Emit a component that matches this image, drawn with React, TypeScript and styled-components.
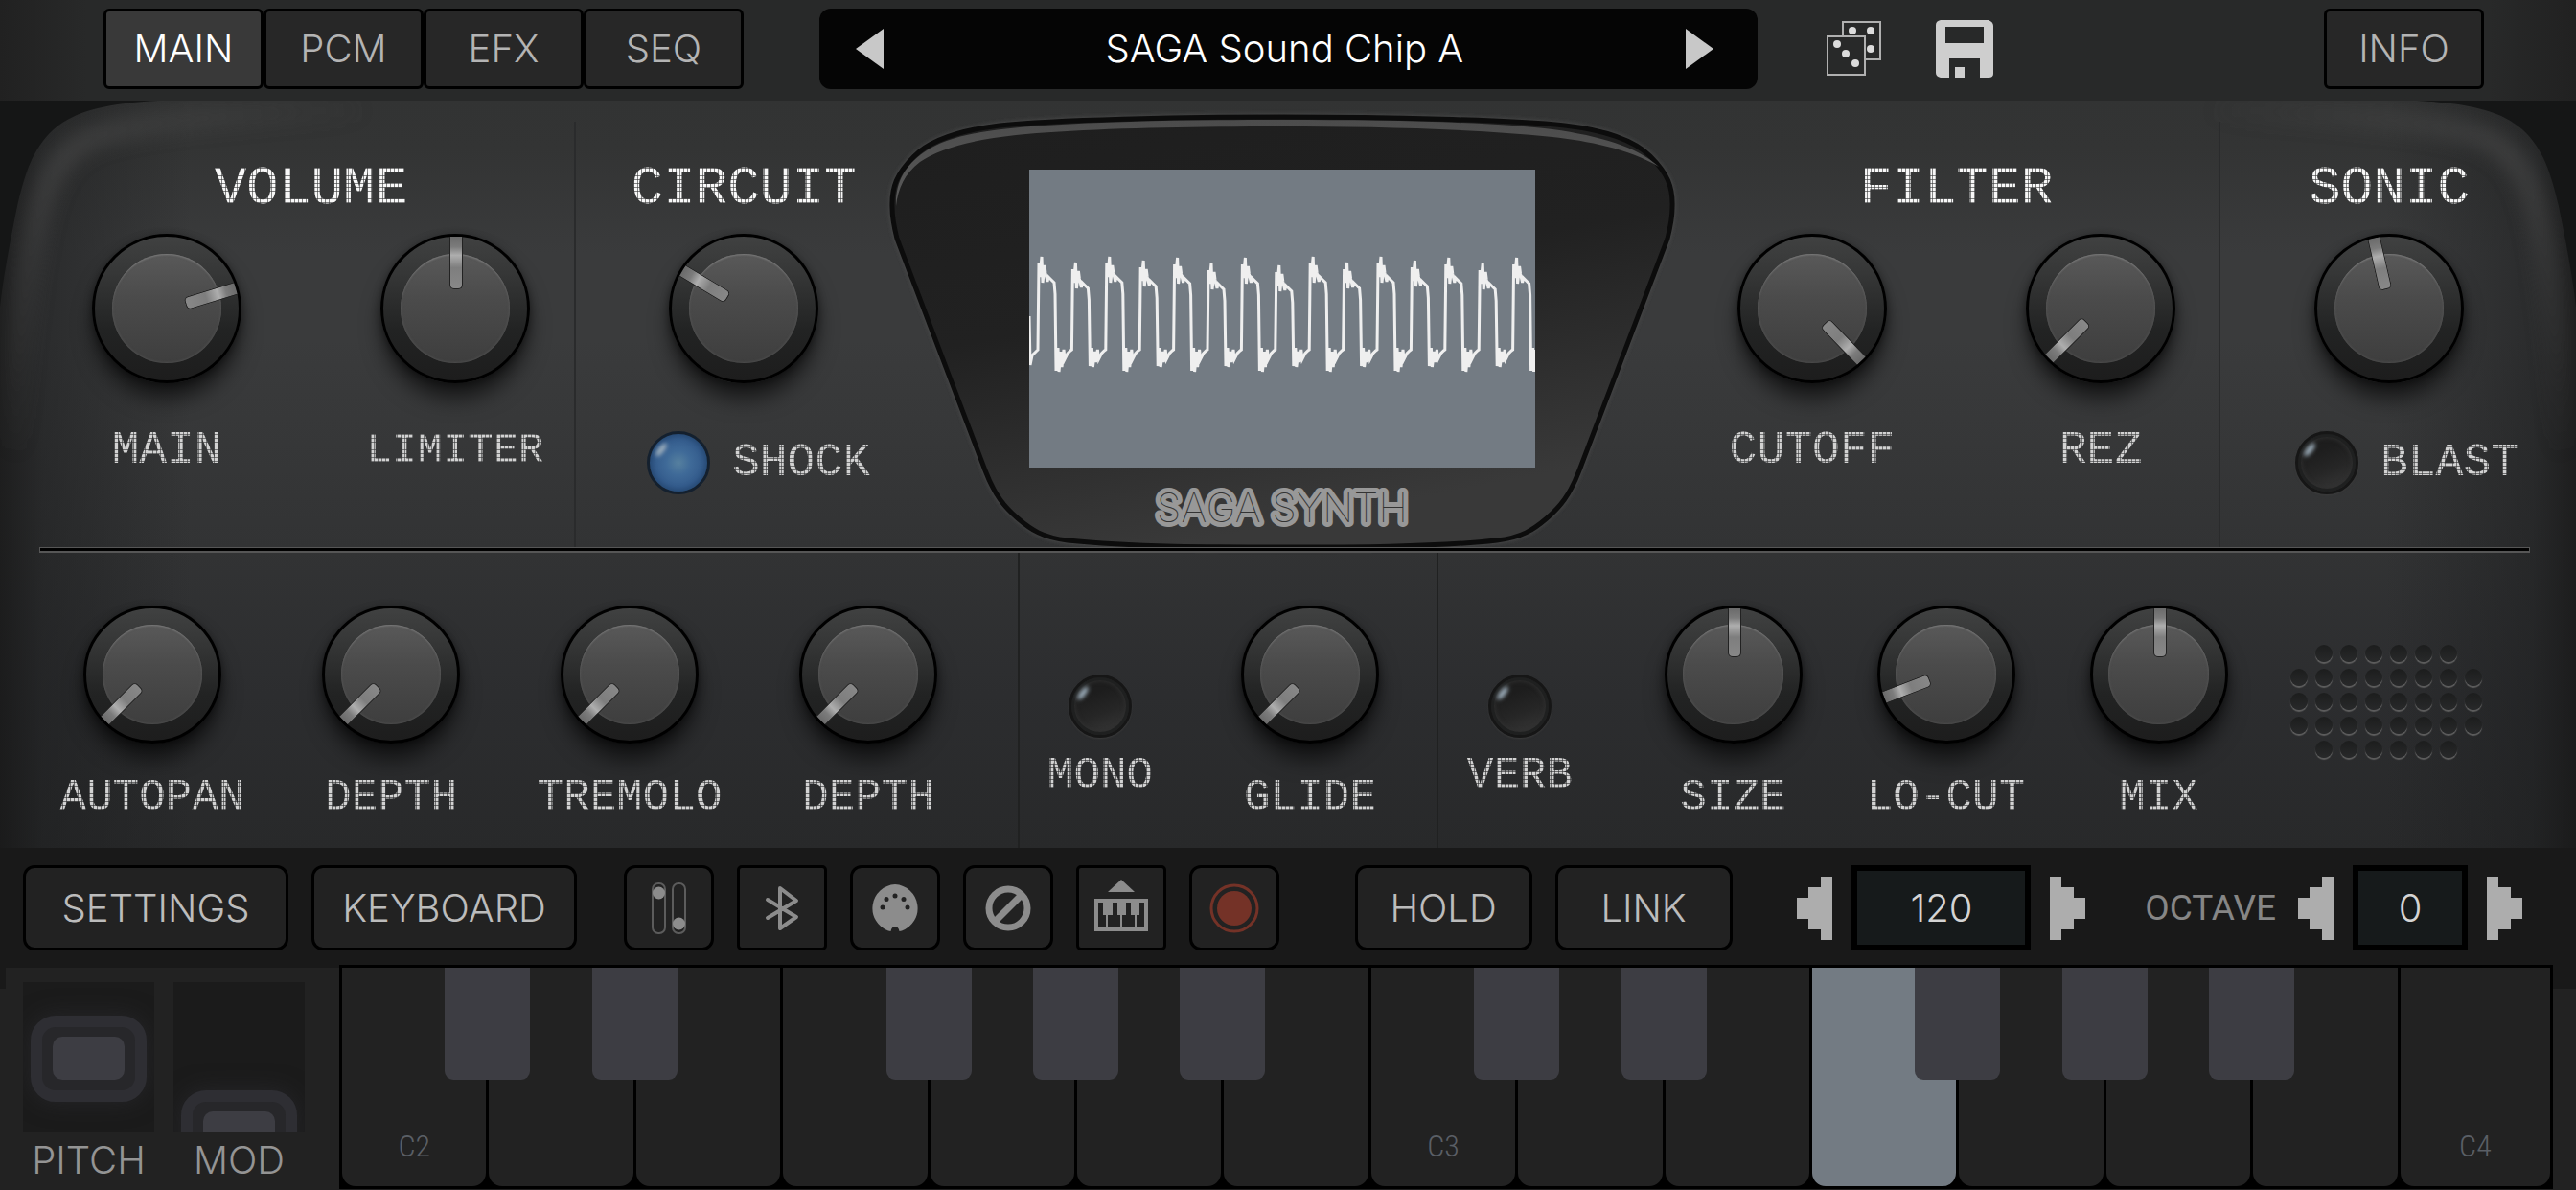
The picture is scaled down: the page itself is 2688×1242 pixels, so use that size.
import React from "react";
import styled, { createGlobalStyle, css } from "styled-components";

const ui = `"Inter", "DejaVu Sans", sans-serif`;
const mono = `"Liberation Mono", monospace`;

const Global = createGlobalStyle`
  * { box-sizing: border-box; }
  body { margin: 0; background: #191919; }
  button, input { font: inherit; color: inherit; margin: 0; }
  button { padding: 0; cursor: pointer; }
`;

const Page = styled.div`
  display: flex;
  flex-direction: column;
  min-height: 100vh;
  font-family: ${ui};
  font-weight: 300;
  font-size: 40px;
  line-height: 48px;
  color: #b8b8b8;
  overflow: hidden;
`;

const Spacer = styled.div<{ $grow: number }>`
  flex: ${(p) => p.$grow} 0 0;
`;

/* ---------- top bar ---------- */

const TopBar = styled.header`
  display: flex;
  align-items: center;
  padding: 9px 96px 12px 108px;
  background: linear-gradient(90deg, #212121, #282929 90px, #282929 calc(100% - 90px), #212121);
`;

const Tabs = styled.nav`
  display: flex;
`;

const TabButton = styled.button<{ $active?: boolean }>`
  width: 167px;
  height: 84px;
  border: 3px solid #000;
  border-radius: 6px;
  background: ${(p) => (p.$active ? "#393939" : "#272727")};
  color: ${(p) => (p.$active ? "#fff" : "#b4b4b4")};
`;

const PresetBar = styled.div`
  flex: 894 0 0;
  display: flex;
  align-items: center;
  justify-content: space-between;
  height: 84px;
  margin-left: 79px;
  padding: 0 46px 0 38px;
  border-radius: 12px;
  background: #050505;
  color: #fff;
`;

const BareButton = styled.button`
  display: flex;
  border: 0;
  background: none;
  color: #c8c8c8;
`;

const TopIcons = styled.div`
  display: flex;
  align-items: center;
  gap: 56px;
  margin-left: 72px;
`;

/* ---------- synth panel ---------- */

const Panel = styled.main`
  position: relative;
  background:
    linear-gradient(90deg, rgba(22, 22, 22, 0.75), rgba(28, 29, 30, 0.5) 45px, rgba(40, 41, 42, 0) 200px,
      rgba(40, 41, 42, 0) calc(100% - 200px), rgba(28, 29, 30, 0.5) calc(100% - 45px), rgba(22, 22, 22, 0.75)),
    linear-gradient(#323333, #333434 50px, #3a3b3c 160px, #3a3b3c 250px, #323334 467px, #2c2d2f 620px, #28292a);
`;

const Corner = styled.svg<{ $right?: boolean }>`
  position: absolute;
  top: 0;
  ${(p) => (p.$right ? css`right: 0; transform: scaleX(-1);` : css`left: 0;`)}
`;

const UpperRow = styled.div`
  display: grid;
  grid-template-columns: 600fr 330fr 816px 570fr 372fr;
  height: 466px;
  position: relative;
`;

const LowerRow = styled.div`
  position: relative;
  display: grid;
  grid-template-columns: 1062fr 437fr 1189fr;
  height: 308px;
`;

const Divider = styled.hr`
  position: relative;
  height: 6px;
  margin: 0 48px 0 41px;
  border: solid #565656;
  border-width: 1px 1px 2px;
  background: #000;
`;

const Section = styled.section<{ $l: number; $r: number; $line?: boolean }>`
  position: relative;
  display: flex;
  flex-direction: column;
  align-items: center;
  padding: 67px ${(p) => p.$r}px 0 ${(p) => p.$l}px;
  ${(p) =>
    p.$line &&
    css`
      &::after {
        content: "";
        position: absolute;
        top: 22px;
        bottom: 0;
        right: -1px;
        width: 2px;
        background: #2a2b2c;
      }
    `}
`;

const dots = css`
  mask-image: repeating-linear-gradient(90deg, #000 0 3px, rgba(0, 0, 0, 0.4) 3px 4px),
    repeating-linear-gradient(#000 0 3px, rgba(0, 0, 0, 0.4) 3px 4px);
  mask-composite: intersect;
`;

const Title = styled.h2`
  margin: 0 0 22px;
  font: 400 56px/50px ${mono};
  color: #f8f8f8;
  ${dots}
`;

const PanelLabel = styled.span<{ $size?: number }>`
  font: 400 ${(p) => p.$size ?? 46}px/40px ${mono};
  color: #d2d2d2;
  white-space: nowrap;
  ${dots}
`;

const KnobRow = styled.div`
  display: flex;
  justify-content: space-between;
  align-self: stretch;
`;

const KnobBox = styled.label<{ $size: number; $gap: number }>`
  position: relative;
  display: flex;
  flex-direction: column;
  align-items: center;
  gap: ${(p) => p.$gap}px;
  width: ${(p) => p.$size}px;
`;

const HiddenRange = styled.input`
  position: absolute;
  inset: 0;
  width: 100%;
  height: 100%;
  opacity: 0;
  cursor: pointer;
`;

const Dial = styled.span<{ $size: number }>`
  position: relative;
  display: flex;
  align-items: center;
  justify-content: center;
  flex: none;
  width: ${(p) => p.$size}px;
  height: ${(p) => p.$size}px;
  border: 3px solid #000;
  border-radius: 50%;
  background: linear-gradient(#404141, #363737 25%, #222323 65%, #1d1d1d);
  box-shadow: 0 18px 22px -2px rgba(0, 0, 0, 0.6), 0 2px 8px rgba(0, 0, 0, 0.4);
`;

const Cap = styled.span`
  width: 76%;
  height: 76%;
  border-radius: 50%;
  background: linear-gradient(#595959, #4b4b4b 40%, #3e3e3e);
  box-shadow: inset 0 2px 2px -1px #7c7c7c, inset 0 0 3px #5a5a5a;
`;

const Pointer = styled.span<{ $angle: number }>`
  position: absolute;
  inset: 0;
  transform: rotate(${(p) => p.$angle}deg);
  &::before {
    content: "";
    position: absolute;
    left: calc(50% - 6px);
    top: 0;
    width: 12px;
    height: 36%;
    border: solid #222;
    border-width: 0 1px 1px;
    border-radius: 1px 1px 5px 5px;
    background: linear-gradient(#6a6a6a, #7c7c7c 20%, #aeaeae 36%, #7e7e7e 60%, #888);
  }
`;

type KnobProps = { name: string; angle: number; size?: number; gap?: number; text?: number; bare?: boolean };

function Knob(p: KnobProps) {
  const size = p.size ?? 156;
  return (
    <KnobBox $size={size} $gap={p.gap ?? 50}>
      <Dial $size={size}>
        <Cap />
        <Pointer $angle={p.angle} />
      </Dial>
      {!p.bare && <PanelLabel $size={p.text}>{p.name}</PanelLabel>}
      <HiddenRange type="range" min={-135} max={136} defaultValue={p.angle} aria-label={p.name} />
    </KnobBox>
  );
}

const Led = styled.input`
  appearance: none;
  position: relative;
  flex: none;
  width: 66px;
  height: 66px;
  border: 3px solid #161616;
  border-radius: 50%;
  background: linear-gradient(160deg, #1d1d1d 30%, #262626 60%, #3b3b3b);
  box-shadow: inset 0 0 0 3px #1f2020, inset 0 0 4px 4px #2f2f2f, 0 1px 2px #3c3c3c;
  &:checked {
    border-color: #14202e;
    background: radial-gradient(#56809f, #3f6a98 30%, #32598a 65%, #2a4c78);
    box-shadow: inset 0 0 5px 2px #274a73;
  }
  &::before {
    content: "";
    position: absolute;
    left: 9px;
    top: 8px;
    width: 6px;
    height: 17px;
    border-radius: 50%;
    background: #9fb0bd;
    filter: blur(2px);
    transform: rotate(38deg);
  }
`;

const SideLed = styled.label`
  display: flex;
  align-items: center;
  justify-content: flex-end;
  align-self: stretch;
  gap: 23px;
  margin-top: 50px;
`;

const StackLed = styled.label`
  display: flex;
  flex-direction: column;
  align-items: center;
  gap: 20px;
  width: 66px;
  margin-top: 72px;
`;

const LowerGroup = styled.section<{ $l: number; $r: number; $line?: boolean }>`
  display: flex;
  justify-content: space-between;
  align-items: flex-start;
  padding: 55px ${(p) => p.$r}px 0 ${(p) => p.$l}px;
  border-left: ${(p) => (p.$line ? "2px solid #202121" : "0")};
`;

const KnobTrio = styled.div`
  display: flex;
  gap: 78px;
  margin-left: 52px;
`;

const Grille = styled.div`
  display: flex;
  flex-direction: column;
  align-items: center;
  gap: 7px;
  margin-top: 41px;
`;

const GrilleRow = styled.div`
  display: flex;
  gap: 8px;
`;

const Hole = styled.i`
  width: 18px;
  height: 18px;
  border-radius: 50%;
  background: linear-gradient(#1c1d1d, #28292a);
  box-shadow: 0 2px 1px #5e5e5e;
`;

/* ---------- display ---------- */

const Bezel = styled.div`
  position: relative;
  display: flex;
  flex-direction: column;
  align-items: center;
  padding-top: 72px;
`;

const BezelArt = styled.svg`
  position: absolute;
  left: 0;
  top: 0;
  overflow: visible;
`;

const Screen = styled.svg`
  position: relative;
  display: block;
  background: #737b83;
`;

const Logo = styled.svg`
  position: relative;
  margin-top: 14px;
  font: 100 42px ${ui};
`;

/* one cycle of the square-like wave: [dx, y] */
const CYCLE = [
  [0, 188], [1, 98], [2, 112], [4, 91], [5, 118], [7, 100], [8, 108], [10, 117], [11, 112], [14, 115], [17, 118],
  [18, 130], [19, 209], [21, 186], [22, 210], [24, 190], [25, 205], [27, 188], [28, 198], [31, 192], [34, 189],
];

const wavePoints = (() => {
  const pts: string[] = ["0,153", "1,204", "3,194", "8,189"];
  for (let i = 0; i < 15; i++) {
    const x0 = 9 + i * 35.4;
    const lift = [0, 6, 0, 4, 1, 7, 1, 9][i % 8];
    for (const [dx, y] of CYCLE) {
      const k = y < 140 ? lift : y > 200 ? (i % 2 ? -4 : 1) : 0;
      pts.push(`${Math.min(527, x0 + dx).toFixed(1)},${y + k}`);
    }
  }
  return pts.join(" ");
})();

const BEZEL_PATH =
  "M408 17C300 17 170 20 113 26C70 31 40 42 24 58C6 76 0 90 1 112C1 124 3 132 6 144L98 386C108 412 118 424 132 436C146 448 158 456 184 459C250 466 340 466 408 466C476 466 566 466 632 459C658 456 670 448 684 436C698 424 708 412 718 386L810 144C813 132 815 124 815 112C816 90 810 76 792 58C776 42 746 31 703 26C646 20 516 17 408 17Z";

function Display() {
  return (
    <Bezel>
      <BezelArt width="816" height="467" aria-hidden="true">
        <defs>
          <linearGradient id="bezel" x1="0" y1="0" x2="0.35" y2="1">
            <stop offset="0" stopColor="#1e1e1e" />
            <stop offset="0.5" stopColor="#212121" />
            <stop offset="1" stopColor="#393939" />
          </linearGradient>
          <linearGradient id="rim" x1="0" y1="0" x2="0" y2="1">
            <stop offset="0" stopColor="#4c4c4c" />
            <stop offset="1" stopColor="#5a5a5a" />
          </linearGradient>
          <filter id="soft"><feGaussianBlur stdDeviation="2" /></filter>
        </defs>
        <path d={BEZEL_PATH} fill="none" stroke="#48494a" strokeWidth="6" filter="url(#soft)" />
        <path d={BEZEL_PATH} fill="url(#bezel)" stroke="#0c0c0c" strokeWidth="5" />
        <path
          d="M5 110C4 86 14 68 34 54C60 36 100 30 160 26C240 21 320 20 408 20C520 20 620 22 690 30C740 37 778 48 801 69C770 50 726 42 690 38C600 29 500 27 408 27C310 27 200 29 130 36C84 41 50 50 30 64C14 76 7 92 5 110Z"
          fill="url(#rim)"
        />
      </BezelArt>
      <Screen width="528" height="311" viewBox="0 0 528 311" role="img" aria-label="Waveform">
        <polyline points={wavePoints} fill="none" stroke="#efefef" strokeWidth="3" />
      </Screen>
      <Logo width="300" height="60" role="img" aria-label="SAGA SYNTH">
        <text
          x="150"
          y="43"
          textAnchor="middle"
          fill="#333"
          stroke="#989898"
          strokeWidth="10"
          strokeLinejoin="round"
          paintOrder="stroke"
        >
          SAGA SYNTH
        </text>
      </Logo>
    </Bezel>
  );
}

function CornerArt({ right }: { right?: boolean }) {
  const id = right ? "cornerR" : "cornerL";
  return (
    <Corner $right={right} width="420" height="600" aria-hidden="true">
      <defs>
        <filter id={id} x="-30%" y="-30%" width="160%" height="160%"><feGaussianBlur stdDeviation="9" /></filter>
        <radialGradient id={id + "g"} gradientUnits="userSpaceOnUse" cx="70" cy="60" r="320">
          <stop offset="0" stopColor="#4c4c4c" />
          <stop offset="1" stopColor="#4c4c4c" stopOpacity="0" />
        </radialGradient>
      </defs>
      <path
        d="M12 467C14 330 22 200 38 130C48 80 64 50 104 36C150 22 240 12 420 8"
        fill="none"
        stroke={`url(#${id}g)`}
        strokeWidth="26"
        opacity="0.55"
        filter={`url(#${id})`}
      />
      <path d="M0 0H165C115 3 80 9 56 30C34 50 26 76 18 110C10 150 4 180 0 215Z" fill="#151616" />
    </Corner>
  );
}

/* ---------- toolbar ---------- */

const Toolbar = styled.div`
  display: flex;
  align-items: center;
  padding: 18px 56px 15px 24px;
  background: #191919;
`;

const Group = styled.div<{ $gap: number }>`
  display: flex;
  align-items: center;
  gap: ${(p) => p.$gap}px;
`;

const ToolButton = styled.button<{ $w: number; $sharp?: boolean }>`
  display: flex;
  align-items: center;
  justify-content: center;
  width: ${(p) => p.$w}px;
  height: 89px;
  border: 3px solid #000;
  border-radius: ${(p) => (p.$sharp ? 5 : 12)}px;
  background: #222;
  color: #bcbcbc;
  svg { color: #8c8c8c; }
`;

const NumberBox = styled.input<{ $w: number }>`
  width: ${(p) => p.$w}px;
  height: 89px;
  padding: 0;
  border: 6px solid #000;
  border-radius: 0;
  background: #161a1b;
  color: #d4d4d4;
  text-align: center;
`;

const OctaveLabel = styled.label`
  font: 400 37px/48px Roboto, sans-serif;
  color: #868686;
  margin-right: 3px;
`;

function StepArrow({ right, name }: { right?: boolean; name: string }) {
  return (
    <BareButton aria-label={name}>
      <svg width="37" height="66" viewBox="0 0 37 66" fill="#adadad">
        <path d={right ? "M0 0H12V11H25V22H37V44H25V55H12V66H0Z" : "M37 0H25V11H12V22H0V44H12V55H25V66H37Z"} />
      </svg>
    </BareButton>
  );
}

/* ---------- keyboard ---------- */

const KeyboardArea = styled.div`
  flex: 1;
  display: flex;
  padding: 0 24px 1px 6px;
  min-height: 235px;
  background: linear-gradient(#191919 25px, #222 25px);
`;

const Wheels = styled.div`
  display: flex;
  gap: 20px;
  width: 348px;
  padding: 18px 0 0 18px;
  background: linear-gradient(#191919 3px, #222 3px);
  color: #949494;
`;

const WheelBox = styled.label`
  display: flex;
  flex-direction: column;
  align-items: center;
  position: relative;
  width: 137px;
  gap: 6px;
`;

const Track = styled.span<{ $at: number }>`
  display: block;
  align-self: stretch;
  height: 156px;
  padding: ${(p) => p.$at}px 8px 0;
  overflow: hidden;
  background: #1b1b1b;
`;

const Thumb = styled.span`
  display: block;
  height: 90px;
  padding: 10px 11px;
  border: 12px solid #2e2e33;
  border-radius: 26px;
  background: #27272a;
  box-shadow: 0 0 24px rgba(50, 50, 56, 0.5);
  &::before {
    content: "";
    display: block;
    height: 45px;
    border-radius: 10px;
    background: #3d3d43;
  }
`;

const Keys = styled.div`
  flex: 1;
  display: flex;
  gap: 3px;
  padding: 3px;
  background: #000;
`;

const KeySlot = styled.div<{ $grow: number }>`
  position: relative;
  flex: ${(p) => p.$grow} 1 0;
  display: flex;
`;

const WhiteKey = styled.button<{ $down?: boolean }>`
  flex: 1;
  display: flex;
  align-items: flex-end;
  justify-content: center;
  padding-bottom: 18px;
  border: 0;
  border-radius: 0 0 14px 14px;
  background: ${(p) => (p.$down ? "#737b83" : "#222")};
  color: #5a5f66;
  font: 300 32px/48px "Roboto Condensed", "Liberation Sans Narrow", Roboto, sans-serif;
`;

const BlackKey = styled.button`
  position: absolute;
  z-index: 1;
  top: 0;
  right: -46px;
  width: 89px;
  height: 117px;
  border: 0;
  border-radius: 0 0 9px 9px;
  background: #3d3d43;
`;

const SHARPS = [0, 1, 3, 4, 5];
const NAMES: Record<number, string> = { 0: "C2", 7: "C3", 14: "C4" };

export default function App() {
  return (
    <Page>
      <Global />
      <TopBar>
        <Tabs>
          <TabButton $active>MAIN</TabButton>
          <TabButton>PCM</TabButton>
          <TabButton>EFX</TabButton>
          <TabButton>SEQ</TabButton>
        </Tabs>
        <PresetBar>
          <BareButton aria-label="Previous preset">
            <svg width="29" height="42" fill="currentColor"><path d="M29 0V42L0 21Z" /></svg>
          </BareButton>
          <span>SAGA Sound Chip A</span>
          <BareButton aria-label="Next preset">
            <svg width="29" height="42" fill="currentColor"><path d="M0 0V42L29 21Z" /></svg>
          </BareButton>
        </PresetBar>
        <TopIcons>
          <BareButton aria-label="Randomize">
            <svg width="58" height="58" fill="none" stroke="#b0b0b0" strokeWidth="2">
              <path d="M17 15V1H56V40H41" />
              <rect x="1" y="16" width="39" height="40" />
              <g fill="#dcdcdc" stroke="none">
                <circle cx="27" cy="10" r="4" /><circle cx="46" cy="10" r="4" /><circle cx="46" cy="29" r="4" />
                <circle cx="11" cy="24" r="4" /><circle cx="20" cy="34" r="4" /><circle cx="30" cy="44" r="4" />
              </g>
            </svg>
          </BareButton>
          <BareButton aria-label="Save">
            <svg width="60" height="60" fill="#cecece" fillRule="evenodd">
              <path d="M5 0H55Q60 2 60 6V56Q60 60 55 60H46V40H14V60H5Q0 59 0 55V5Q0 1 5 0ZM10 7V24H50V7ZM20 49H30V60H20Z" />
            </svg>
          </BareButton>
        </TopIcons>
        <Spacer $grow={345} />
        <TabButton>INFO</TabButton>
      </TopBar>

      <Panel>
        <CornerArt />
        <CornerArt right />
        <UpperRow>
          <Section $l={96} $r={47} $line>
            <Title>VOLUME</Title>
            <KnobRow>
              <Knob name="MAIN" angle={73} text={48} />
              <Knob name="LIMITER" angle={0} text={44} />
            </KnobRow>
          </Section>
          <Section $l={44} $r={22}>
            <Title>CIRCUIT</Title>
            <Knob name="Circuit" angle={-59} bare />
            <SideLed>
              <Led type="checkbox" defaultChecked />
              <PanelLabel $size={48}>SHOCK</PanelLabel>
            </SideLed>
          </Section>
          <Display />
          <Section $l={67} $r={46} $line>
            <Title>FILTER</Title>
            <KnobRow>
              <Knob name="CUTOFF" angle={136} text={48} />
              <Knob name="REZ" angle={-135} text={48} />
            </KnobRow>
          </Section>
          <Section $l={42} $r={60}>
            <Title>SONIC</Title>
            <Knob name="Sonic" angle={-13} bare />
            <SideLed>
              <Led type="checkbox" />
              <PanelLabel $size={48}>BLAST</PanelLabel>
            </SideLed>
          </Section>
        </UpperRow>
        <Divider />
        <LowerRow>
          <LowerGroup $l={87} $r={84}>
            {["AUTOPAN", "DEPTH", "TREMOLO", "DEPTH"].map((n, i) => (
              <Knob key={i} name={n} angle={-135} size={144} gap={37} />
            ))}
          </LowerGroup>
          <LowerGroup $l={51} $r={60} $line>
            <StackLed>
              <Led type="checkbox" />
              <PanelLabel>MONO</PanelLabel>
            </StackLed>
            <Knob name="GLIDE" angle={-135} size={144} gap={37} />
          </LowerGroup>
          <LowerGroup $l={52} $r={98} $line>
            <StackLed>
              <Led type="checkbox" />
              <PanelLabel>VERB</PanelLabel>
            </StackLed>
            <KnobTrio>
              <Knob name="SIZE" angle={0} size={144} gap={37} />
              <Knob name="LO-CUT" angle={-111} size={144} gap={37} />
              <Knob name="MIX" angle={0} size={144} gap={37} />
            </KnobTrio>
            <Grille>
              {[6, 8, 8, 8, 6].map((n, r) => (
                <GrilleRow key={r}>
                  {Array.from({ length: n }, (_, i) => <Hole key={i} />)}
                </GrilleRow>
              ))}
            </Grille>
          </LowerGroup>
        </LowerRow>
      </Panel>

      <Toolbar>
        <Group $gap={24}>
          <ToolButton $w={277}>SETTINGS</ToolButton>
          <ToolButton $w={277}>KEYBOARD</ToolButton>
        </Group>
        <Spacer $grow={48} />
        <Group $gap={24}>
          <ToolButton $w={94} aria-label="Mixer">
            <svg width="36" height="54" fill="none" stroke="#5c5c5c" strokeWidth="2">
              <rect x="1" y="1" width="13" height="52" rx="6" />
              <rect x="22" y="1" width="13" height="52" rx="6" />
              <g fill="currentColor" stroke="none"><circle cx="7.5" cy="11" r="6.5" /><circle cx="28.5" cy="43" r="6.5" /></g>
            </svg>
          </ToolButton>
          <ToolButton $w={94} $sharp aria-label="Bluetooth">
            <svg width="36" height="48" fill="none" stroke="currentColor" strokeWidth="4" strokeLinecap="round" strokeLinejoin="round">
              <path d="M3 15L33 33L16 45V3L33 16L3 34" />
            </svg>
          </ToolButton>
          <ToolButton $w={94} aria-label="MIDI">
            <svg width="52" height="52" viewBox="0 0 52 52">
              <path d="M26 1A25 25 0 0 1 33 49.5L30.5 50Q29.5 45 26 45Q22.5 45 21.5 50L19 49.5A25 25 0 0 1 26 1Z" fill="currentColor" />
              <g fill="#222"><circle cx="13" cy="25" r="2.500" /><circle cx="17" cy="16.5" r="2.500" /><circle cx="26" cy="13" r="2.500" /><circle cx="35" cy="16.5" r="2.500" /><circle cx="39" cy="25" r="2.500" /></g>
            </svg>
          </ToolButton>
          <ToolButton $w={94} aria-label="Panic">
            <svg width="48" height="48" fill="none" stroke="currentColor" strokeWidth="7">
              <circle cx="24" cy="24" r="20" /><path d="M10 38L38 10" />
            </svg>
          </ToolButton>
          <ToolButton $w={94} $sharp aria-label="Show keyboard">
            <svg width="56" height="60" viewBox="0 0 56 60" fill="currentColor">
              <path d="M28 0L42 13H14Z" />
              <path fillRule="evenodd" d="M0 20H56V54H0ZM4 24V50H12V37H9V24ZM15 37H14V50H27V37H24V24H19V37ZM29 37V50H42V37H38V24H33V37ZM44 37V50H52V24H47V37Z" />
            </svg>
          </ToolButton>
          <ToolButton $w={94} aria-label="Record">
            <svg width="52" height="52">
              <circle cx="26" cy="26" r="24" fill="none" stroke="#743227" strokeWidth="3" />
              <circle cx="26" cy="26" r="18" fill="#743227" />
            </svg>
          </ToolButton>
        </Group>
        <Spacer $grow={78} />
        <Group $gap={24}>
          <ToolButton $w={185}>HOLD</ToolButton>
          <ToolButton $w={185}>LINK</ToolButton>
        </Group>
        <Spacer $grow={67} />
        <Group $gap={20}>
          <StepArrow name="Tempo down" />
          <NumberBox $w={187} defaultValue="120" aria-label="Tempo" />
          <StepArrow right name="Tempo up" />
        </Group>
        <Spacer $grow={61} />
        <Group $gap={20}>
          <OctaveLabel htmlFor="octave">OCTAVE</OctaveLabel>
          <StepArrow name="Octave down" />
          <NumberBox id="octave" $w={120} defaultValue="0" />
          <StepArrow right name="Octave up" />
        </Group>
      </Toolbar>

      <KeyboardArea>
        <Wheels>
          <WheelBox>
            <Track $at={35}><Thumb /></Track>
            PITCH
            <HiddenRange type="range" />
          </WheelBox>
          <WheelBox>
            <Track $at={113}><Thumb /></Track>
            MOD
            <HiddenRange type="range" />
          </WheelBox>
        </Wheels>
        <Keys>
          {Array.from({ length: 15 }, (_, i) => (
            <KeySlot key={i} $grow={i === 14 ? 104 : 100}>
              <WhiteKey $down={i === 10}>{NAMES[i]}</WhiteKey>
              {i < 14 && SHARPS.includes(i % 7) && <BlackKey aria-label="Sharp" />}
            </KeySlot>
          ))}
        </Keys>
      </KeyboardArea>
    </Page>
  );
}
